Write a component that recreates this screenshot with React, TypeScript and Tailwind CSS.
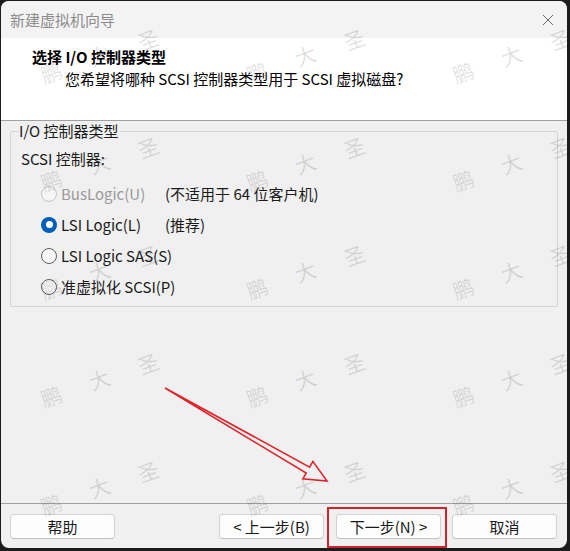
import React from "react";

const FONT = { fontFamily: '"Noto Sans CJK SC", "Noto Sans", sans-serif' };

function Radio({ state }: { state: "checked" | "unchecked" | "disabled" }) {
  if (state === "checked") {
    return (
      <span className="flex h-[16px] w-[16px] items-center justify-center rounded-full bg-[#005fb8]">
        <span className="h-[7px] w-[7px] rounded-full bg-white" />
      </span>
    );
  }
  if (state === "disabled") {
    return <span className="h-[16px] w-[16px] rounded-full border border-[#c4c4c4] bg-[#f5f5f5]" />;
  }
  return <span className="h-[16px] w-[16px] rounded-full border border-[#606060] bg-[#f7f7f7]" />;
}

function Row({
  state,
  label,
  note,
}: {
  state: "checked" | "unchecked" | "disabled";
  label: string;
  note?: string;
}) {
  return (
    <div className="flex h-[31px] items-center whitespace-nowrap">
      <div className="ml-[23px] flex w-[20px] shrink-0 items-center">
        <Radio state={state} />
      </div>
      <span
        className={`min-w-[104px] text-[15px] leading-[20px] ${
          state === "disabled" ? "text-[#9a9a9a]" : "text-[#1a1a1a]"
        }`}
      >
        {label}
      </span>
      {note && <span className="text-[15px] leading-[20px] text-[#1a1a1a]">{note}</span>}
    </div>
  );
}

function Btn({ children }: { children: React.ReactNode }) {
  return (
    <div className="flex h-[25px] w-[105px] items-center justify-center whitespace-nowrap rounded-[4px] border border-[#d2d2d2] border-b-[#c0c0c0] bg-[#fdfdfd] text-[15px] leading-[20px] text-[#1a1a1a]">
      {children}
    </div>
  );
}

function Watermark() {
  const items: { ch: string; x: number; y: number }[] = [];
  for (let r = 0; r < 5; r++) {
    for (let k = 0; k < 3; k++) {
      const bx = 51 + 206 * k;
      const by = 72 + 108 * r;
      items.push({ ch: "鹏", x: bx, y: by });
      items.push({ ch: "大", x: bx + 48, y: by - 17 });
      items.push({ ch: "圣", x: bx + 97, y: by - 33 });
    }
  }
  return (
    <div className="pointer-events-none absolute inset-0 overflow-hidden">
      {items.map((it, i) => (
        <span
          key={i}
          className="absolute flex h-[24px] w-[24px] -translate-x-1/2 -translate-y-1/2 -rotate-[20deg] items-center justify-center text-[21px] leading-[24px] text-black/[0.12]"
          style={{ left: it.x, top: it.y }}
        >
          {it.ch}
        </span>
      ))}
    </div>
  );
}

export default function App() {
  return (
    <div className="relative h-[551px] w-[570px] bg-[#1c1c1c] pl-[1px] pt-[1px]" style={FONT}>
      <div className="flex h-[547px] w-[566px] flex-col overflow-hidden rounded-[8px] bg-[#f0f0f0]">
        {/* title bar */}
        <div className="flex h-[37px] items-center justify-between bg-[#f3f3f3] pl-[9px] pr-[13px]">
          <span className="text-[15px] leading-[20px] text-[#8c8c8c]">新建虚拟机向导</span>
          <svg width="12" height="12" viewBox="0 0 12 12" className="mt-[1px]">
            <path d="M1 1L11 11M11 1L1 11" stroke="#6b6b6b" strokeWidth="1" />
          </svg>
        </div>
        {/* header */}
        <div className="h-[83px] border-b border-[#a0a0a0] bg-white pt-[9px]">
          <div className="ml-[31px] text-[15px] font-bold leading-[20px] text-black">选择 I/O 控制器类型</div>
          <div className="ml-[64px] mt-[2px] whitespace-nowrap text-[15px] leading-[20px] text-black">
            您希望将哪种 SCSI 控制器类型用于 SCSI 虚拟磁盘?
          </div>
        </div>
        {/* body */}
        <fieldset className="mx-[9px] mt-0 rounded-[2px] border border-[#d4d4d4] px-[7px] pb-[4px]">
          <legend className="px-[1px] text-[15px] leading-[20px] text-[#1a1a1a]">I/O 控制器类型</legend>
          <div className="ml-[3px] mt-[8px] text-[15px] leading-[20px] text-[#1a1a1a]">SCSI 控制器:</div>
          <div className="mt-[9px]">
            <Row state="disabled" label="BusLogic(U)" note="(不适用于 64 位客户机)" />
            <Row state="checked" label="LSI Logic(L)" note="(推荐)" />
            <Row state="unchecked" label="LSI Logic SAS(S)" />
            <Row state="unchecked" label="准虚拟化 SCSI(P)" />
          </div>
        </fieldset>
        {/* footer */}
        <div className="mt-auto border-t border-[#a0a0a0] pb-[9px] pl-[9px] pr-[10px] pt-[10px]">
          <div className="flex items-center">
            <Btn>帮助</Btn>
            <div className="ml-auto">
              <Btn>&lt; 上一步(B)</Btn>
            </div>
            <div className="relative ml-[12px]">
              <Btn>下一步(N) &gt;</Btn>
              <div className="pointer-events-none absolute -bottom-[9px] -left-[9px] -right-[6px] -top-[7px] border-2 border-[#d0232c]" />
            </div>
            <div className="ml-[11px]">
              <Btn>取消</Btn>
            </div>
          </div>
        </div>
      </div>
      <Watermark />
      <svg className="pointer-events-none absolute left-0 top-0" width="570" height="551" viewBox="0 0 570 551">
        <polygon
          points="165,388 309.6,467.1 312.9,461.4 327,481 302.9,478.8 306.2,473.1"
          fill="none"
          stroke="#e0242c"
          strokeWidth="1.6"
          strokeLinejoin="miter"
        />
      </svg>
    </div>
  );
}
